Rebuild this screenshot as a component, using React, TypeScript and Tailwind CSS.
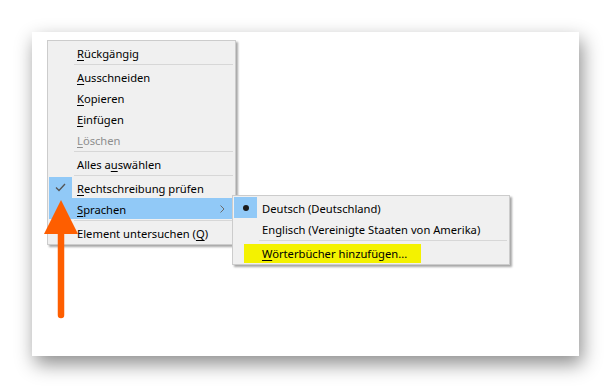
import React from "react";

const font = { fontFamily: '"Noto Sans", "Open Sans", sans-serif' };

function U({ children }: { children: React.ReactNode }) {
  return <span className="underline decoration-1 underline-offset-2">{children}</span>;
}

function Row({
  children,
  icon,
  iconHl,
  hl,
  disabled,
  arrow,
}: {
  children: React.ReactNode;
  icon?: React.ReactNode;
  iconHl?: boolean;
  hl?: boolean;
  disabled?: boolean;
  arrow?: boolean;
}) {
  return (
    <div className={`relative flex h-[21px] items-center ${hl ? "bg-[#91c9f7]" : ""}`}>
      <div className="flex h-full w-[25px] shrink-0 items-center">
        <div className={`flex h-full w-[23px] items-center justify-center ${iconHl ? "bg-[#91c9f7]" : ""}`}>
          {icon}
        </div>
      </div>
      <div
        className={`pl-[3px] pt-[2px] text-[11.2px] leading-none whitespace-nowrap ${disabled ? "text-[#8e8e8e]" : "text-black"}`}
      >
        {children}
      </div>
      {arrow && (
        <svg className="absolute right-[9px] top-[7px]" width="5" height="8" viewBox="0 0 5 8">
          <path d="M0.5 0.5 L4 4 L0.5 7.5" fill="none" stroke="#6b6b6b" strokeWidth="1" />
        </svg>
      )}
    </div>
  );
}

function Sep() {
  return (
    <div className="flex h-[3px] items-center pl-[25px] pr-[1px]">
      <div className="h-px w-full bg-[#d7d7d7]" />
    </div>
  );
}

export default function App() {
  return (
    <div className="relative h-[388px] w-[611px] overflow-hidden bg-white" style={font}>
      <div className="pl-[32px] pt-[32px]">
        <div className="relative h-[324px] w-[547px] bg-white shadow-[3px_8px_18px_rgba(0,0,0,0.45)]">
          {/* main context menu */}
          <div className="absolute left-[15px] top-[8px] w-[189px] border border-[#cccccc] bg-[#f0f0f0] p-px shadow-[2px_2px_2px_rgba(0,0,0,0.35)]">
            <Row>
              <U>R</U>ückgängig
            </Row>
            <Sep />
            <Row>
              <U>A</U>usschneiden
            </Row>
            <Row>
              <U>K</U>opieren
            </Row>
            <Row>
              <U>E</U>infügen
            </Row>
            <Row disabled>
              <U>L</U>öschen
            </Row>
            <Sep />
            <Row>
              Alles a<U>u</U>swählen
            </Row>
            <Sep />
            <Row
              iconHl
              icon={
                <svg width="11" height="9" viewBox="0 0 11 9">
                  <path d="M1 4.5 L4 7.5 L10 1" fill="none" stroke="#555" strokeWidth="1.3" />
                </svg>
              }
            >
              <U>R</U>echtschreibung prüfen
            </Row>
            <Row hl arrow>
              <U>S</U>prachen
            </Row>
            <Sep />
            <Row>
              Element untersuchen (<U>Q</U>)
            </Row>
          </div>

          {/* submenu */}
          <div className="absolute left-[200px] top-[163px] w-[278px] border border-[#cccccc] bg-[#f0f0f0] p-px shadow-[2px_2px_2px_rgba(0,0,0,0.35)]">
            <Row iconHl icon={<div className="h-[6px] w-[6px] rounded-full bg-[#1a1a1a]" />}>
              Deutsch (Deutschland)
            </Row>
            <Row>Englisch (Vereinigte Staaten von Amerika)</Row>
            <Sep />
            <div className="relative">
              <div className="absolute left-[10px] top-[2px] h-[19px] w-[177px] bg-[#f4f200]" />
              <div className="relative">
                <Row>
                  <U>W</U>örterbücher hinzufügen...
                </Row>
              </div>
            </div>
          </div>
        </div>
      </div>

      {/* orange arrow */}
      <svg className="absolute left-0 top-0" width="611" height="388" viewBox="0 0 611 388">
        <line x1="61" y1="228" x2="61" y2="315" stroke="#fe5e00" strokeWidth="6.5" strokeLinecap="round" />
        <polygon points="61,200 78,234 44,234" fill="#fe5e00" />
      </svg>
    </div>
  );
}
